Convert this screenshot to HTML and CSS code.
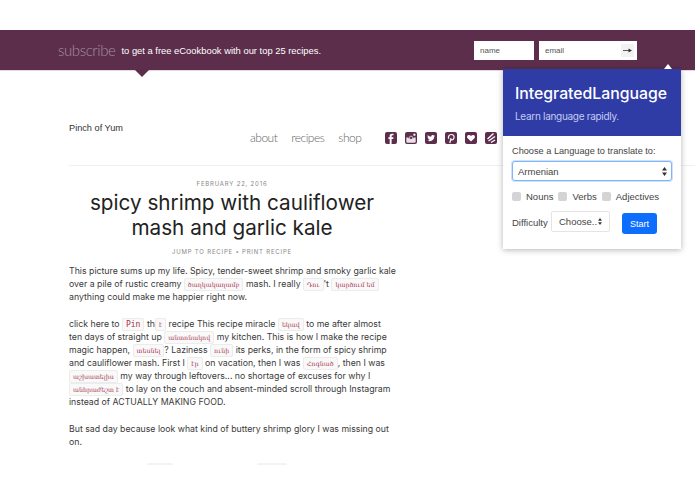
FILE: index.html
```html
<!DOCTYPE html>
<html lang="en">
<head>
<meta charset="UTF-8">
<meta name="viewport" content="width=device-width, initial-scale=1.0">
<title>Pinch of Yum</title>
<link rel="stylesheet" href="styles.css">
</head>
<body>
<div class="sub-bar">
  <span class="sub-word">subscribe</span>
  <span class="sub-text">to get a free eCookbook with our top 25 recipes.</span>
  <div class="sub-form">
    <input class="sub-name" type="text" placeholder="name">
    <div class="sub-email">
      <input type="text" placeholder="email">
      <span class="sub-go">
        <svg width="9" height="5" viewBox="0 0 9 5"><path d="M0 2.5h6" stroke="#333" stroke-width="0.8"/><path d="M5.5 0.5L9 2.5L5.5 4.5z" fill="#333"/></svg>
      </span>
    </div>
  </div>
</div>

<div class="site-head">
  <div class="logo">Pinch of Yum</div>
  <div class="nav">
    <a>about</a>
    <a>recipes</a>
    <a>shop</a>
  </div>
  <div class="social">
    <svg viewBox="0 0 12 12"><rect width="12" height="12" rx="2" fill="#5c2e4c"/><path d="M6.6 12V7H8.2L8.5 5.2H6.6V4.2C6.6 3.6 6.9 3.3 7.5 3.3H8.5V1.7H7C5.5 1.7 4.7 2.6 4.7 4V5.2H3.4V7H4.7V12z" fill="#fff"/></svg>
    <svg viewBox="0 0 12 12"><rect width="12" height="12" rx="2" fill="#5c2e4c"/><path d="M1.3 5.4H3.2A3 3 0 0 0 8.8 5.4H10.7V9.5A1.2 1.2 0 0 1 9.5 10.7H2.5A1.2 1.2 0 0 1 1.3 9.5z" fill="#e9e2e7"/><circle cx="6" cy="5.8" r="1.7" fill="none" stroke="#e9e2e7" stroke-width="0.8"/><rect x="8.4" y="1.7" width="2" height="2" fill="#fff"/></svg>
    <svg viewBox="0 0 12 12"><rect width="12" height="12" rx="2" fill="#5c2e4c"/><path d="M2.3 8.6C5.8 10.3 9.3 8.2 9.3 4.6L10 3.8L9.1 4L9.7 3.1L8.8 3.5C7.8 2.5 6 3.2 6.2 4.8C4.8 4.8 3.6 4.1 2.8 3.1C2.4 3.9 2.6 4.8 3.3 5.3L2.6 5.1C2.6 5.9 3.1 6.5 3.9 6.8H3.2C3.5 7.4 4 7.8 4.7 7.8C4 8.4 3.2 8.6 2.3 8.6z" fill="#fff"/></svg>
    <svg viewBox="0 0 12 12"><rect width="12" height="12" rx="2" fill="#5c2e4c"/><path d="M4.8 11L6 6.2M3.8 6.8C2.6 4.6 4.2 2.5 6.3 2.5C8.2 2.5 9.4 3.9 9 5.8C8.6 7.8 6.4 8.4 5.5 7.2" fill="none" stroke="#fff" stroke-width="1.2"/></svg>
    <svg viewBox="0 0 12 12"><rect width="12" height="12" rx="2" fill="#5c2e4c"/><path d="M6 9.6L2.6 6.2C1.4 4.8 2.3 2.9 3.9 2.9C4.8 2.9 5.5 3.4 6 4.1C6.5 3.4 7.2 2.9 8.1 2.9C9.7 2.9 10.6 4.8 9.4 6.2z" fill="#fff"/></svg>
    <svg viewBox="0 0 12 12"><rect width="12" height="12" rx="2" fill="#5c2e4c"/><path d="M2.5 7L8.5 1.5M3.5 9L10 4.5M6 10.5L10 8" fill="none" stroke="#fff" stroke-width="1.3"/></svg>
  </div>
</div>

<div class="post">
  <div class="post-date">FEBRUARY 22, 2016</div>
  <h1>spicy shrimp with cauliflower mash and garlic kale</h1>
  <div class="post-links">JUMP TO RECIPE • PRINT RECIPE</div>
  <p>This picture sums up my life. Spicy, tender-sweet shrimp and smoky garlic kale<br>
  over a pile of rustic creamy <code>ծաղկակաղամբ</code> mash. I really <code>Դու</code>'t <code>կարծում եմ</code><br>
  anything could make me happier right now.</p>
  <p>click here to <code class="big">Pin</code> th<code>է</code> recipe This recipe miracle <code>եկավ</code> to me after almost<br>
  ten days of straight up <code>անտոնակով</code> my kitchen. This is how I make the recipe<br>
  magic happen, <code>տեսնել</code>? Laziness <code>ունի</code> its perks, in the form of spicy shrimp<br>
  and cauliflower mash. First I <code>էր</code> on vacation, then I was <code>Հոգնած</code>, then I was<br>
  <code>աշխատելիս</code> my way through leftovers... no shortage of excuses for why I<br>
  <code>անհրաժեշտ է</code> to lay on the couch and absent-minded scroll through Instagram<br>
  instead of ACTUALLY MAKING FOOD.</p>
  <p>But sad day because look what kind of buttery shrimp glory I was missing out<br>
  on.</p>
  <div class="chip-tops">
    <span></span>
    <span class="wide"></span>
  </div>
</div>

<div class="popup">
  <div class="popup-notch"></div>
  <div class="popup-head">
    <div class="popup-title">IntegratedLanguage</div>
    <div class="popup-sub">Learn language rapidly.</div>
  </div>
  <div class="popup-body">
    <div class="popup-label">Choose a Language to translate to:</div>
    <div class="select lang">
      <span>Armenian</span>
      <svg width="5" height="9" viewBox="0 0 5 9"><path d="M2.5 0L5 3.5H0zM2.5 9L0 5.5H5z" fill="#333"/></svg>
    </div>
    <div class="checks">
      <span class="check"></span><span class="check-name">Nouns</span>
      <span class="check"></span><span class="check-name">Verbs</span>
      <span class="check"></span><span class="check-name">Adjectives</span>
    </div>
    <div class="diff">
      <span class="diff-name">Difficulty</span>
      <div class="select small">
        <span>Choose..</span>
        <svg width="4" height="7" viewBox="0 0 5 9"><path d="M2.5 0L5 3.5H0zM2.5 9L0 5.5H5z" fill="#333"/></svg>
      </div>
      <button class="start">Start</button>
    </div>
  </div>
</div>
</body>
</html>
```

FILE: styles.css
```css
body {
  font-family: Inter, "DejaVu Sans", sans-serif;
  margin: 0;
  padding: 30px 0 0;
  background-color: #fff;
  color: #333;
  overflow: hidden;
}
.sub-bar {
  position: relative;
  display: flex;
  align-items: center;
  height: 40px;
  padding: 0 58px;
  background-color: #5c2e4c;
  border-bottom: 1px solid #e6d8e2;
}
.sub-bar::after {
  content: "";
  position: absolute;
  left: 135px;
  top: 40px;
  border-left: 7px solid transparent;
  border-right: 7px solid transparent;
  border-top: 7px solid #5c2e4c;
}
.sub-word {
  font-family: Lato, sans-serif;
  font-weight: 300;
  font-size: 15px;
  letter-spacing: -0.4px;
  color: #a78da0;
  margin-right: 6px;
}
.sub-text {
  font-family: "Liberation Sans", sans-serif;
  font-size: 9.4px;
  color: #fff;
}
.sub-form {
  display: flex;
  gap: 5px;
  margin-left: auto;
}
.sub-form input {
  box-sizing: border-box;
  height: 19px;
  border: 0;
  padding: 0 6px;
  font-family: "Liberation Sans", sans-serif;
  font-size: 8px;
  background: #fff;
  outline: none;
}
.sub-form input::placeholder {
  color: #555;
}
.sub-name {
  width: 60px;
}
.sub-email {
  display: flex;
  align-items: center;
  width: 98px;
  height: 19px;
  background: #fff;
}
.sub-email input {
  width: 82px;
}
.sub-go {
  display: flex;
  align-items: center;
  justify-content: center;
  width: 13px;
  height: 13px;
  background: #f2f2f2;
}

.site-head {
  position: relative;
  display: flex;
  height: 94px;
  margin-left: 69px;
  border-bottom: 1px solid #f0f0f0;
}
.logo {
  margin-top: 52px;
  font-family: "Liberation Sans", sans-serif;
  font-size: 9.2px;
  color: #333;
  width: 181px;
}
.nav {
  display: flex;
  gap: 14px;
  margin-top: 59px;
  font-family: Lato, sans-serif;
  font-weight: 300;
  font-size: 12px;
  letter-spacing: -0.5px;
  color: #666;
  height: 16px;
}
.social {
  display: flex;
  gap: 8px;
  margin: 61px 0 0 24px;
}
.social svg {
  width: 12px;
  height: 12px;
}

.post {
  width: 326px;
  margin-left: 69px;
  font-size: 8.75px;
  line-height: 13px;
  color: #3a3a3a;
}
.post-date {
  margin-top: 11px;
  text-align: center;
  font-size: 6px;
  letter-spacing: 0.8px;
  color: #888;
}
h1 {
  margin: 0 0 5px;
  text-align: center;
  font-size: 20.7px;
  line-height: 25px;
  font-weight: 400;
  color: #222;
}
.post-links {
  text-align: center;
  font-size: 6px;
  letter-spacing: 0.8px;
  color: #888;
}
p {
  width: 345px;
  margin: 7px 0 14px;
}
code {
  font-family: "DejaVu Serif", serif;
  font-size: 6.3px;
  line-height: 1;
  color: #a8324e;
  background: #f9f9f9;
  border: 1px solid #ececec;
  border-radius: 2px;
  padding: 2px 3px;
}
code.big {
  font-family: "DejaVu Sans Mono", monospace;
  font-size: 8px;
  padding: 1px 3px;
}
.chip-tops {
  display: flex;
  height: 2px;
  margin-top: 12px;
  margin-left: 78px;
  gap: 84px;
}
.chip-tops span {
  width: 26px;
  background: #f3f3f3;
  border-radius: 2px 2px 0 0;
}
.chip-tops .wide {
  width: 30px;
}

.popup {
  position: absolute;
  left: 503px;
  top: 69px;
  width: 178px;
  height: 180px;
  background: #fff;
  box-shadow: 0 1px 6px rgba(0, 0, 0, 0.3);
}
.popup-notch {
  position: absolute;
  right: 9px;
  top: -5px;
  border-left: 4px solid transparent;
  border-right: 4px solid transparent;
  border-bottom: 5px solid #fff;
}
.popup-head {
  height: 67px;
  box-sizing: border-box;
  padding: 14px 12px 0;
  background: #2f3ca6;
  color: #fff;
}
.popup-title {
  font-size: 15.8px;
  font-weight: 500;
  line-height: 22px;
}
.popup-sub {
  margin-top: 4px;
  font-size: 10px;
  line-height: 14px;
  letter-spacing: -0.3px;
  color: #c3cbf2;
}
.popup-body {
  padding: 8px 9px 0;
  font-family: "Liberation Sans", sans-serif;
  color: #444;
  font-size: 9px;
}
.popup-label {
  line-height: 14px;
  font-size: 9.2px;
}
.select {
  display: flex;
  align-items: center;
  justify-content: space-between;
  box-sizing: border-box;
  background: #fff;
}
.lang {
  width: 160px;
  height: 20px;
  margin-top: 3px;
  padding: 0 4px 0 5px;
  border: 1px solid #80b4fb;
  border-radius: 3px;
  box-shadow: 0 0 0 1px #cfe2fd;
  font-size: 9.5px;
}
.checks {
  display: flex;
  align-items: center;
  margin-top: 10px;
  height: 10px;
}
.check {
  width: 9px;
  height: 9px;
  background: #d4d4d4;
  border-radius: 2px;
}
.check-name {
  margin: 0 5px;
  font-size: 9.5px;
}
.diff {
  display: flex;
  align-items: flex-start;
  margin-top: 10px;
}
.diff-name {
  align-self: center;
  font-size: 9.5px;
  width: 39px;
}
.small {
  width: 59px;
  height: 21px;
  padding: 0 7px;
  border: 1px solid #e4e4e4;
  border-radius: 2px;
  font-size: 9.5px;
}
.start {
  width: 35px;
  height: 21px;
  margin-left: 12px;
  margin-top: 2px;
  padding: 0;
  border: 0;
  border-radius: 3px;
  background: #0d6efd;
  color: #fff;
  font-family: "Liberation Sans", sans-serif;
  font-size: 9px;
}
```
